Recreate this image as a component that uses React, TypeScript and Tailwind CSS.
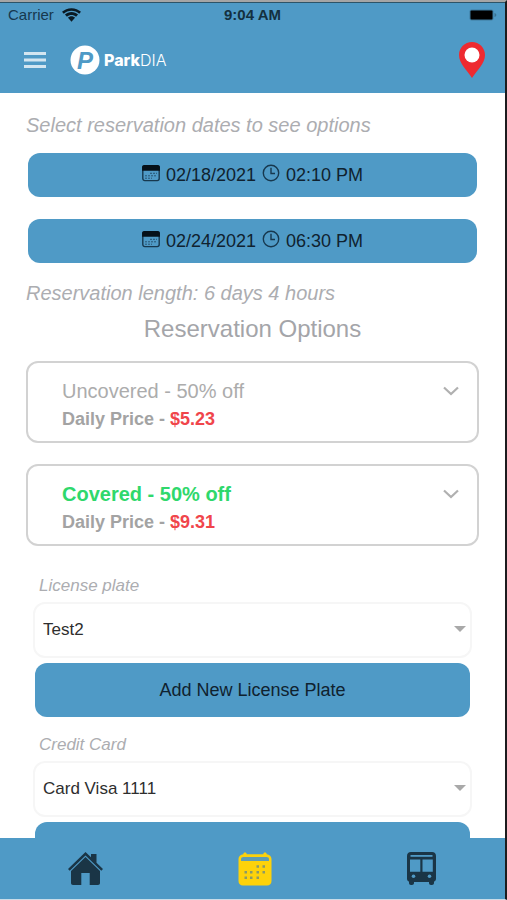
import { useState } from "react";

// brand blue used by the bars and all the buttons: #4f9ac6

function WifiIcon() {
  return (
    <svg width="19" height="14" viewBox="0 0 18 13" fill="currentColor" aria-hidden="true">
      <path d="M9 0C5.500 0 2.300 1.300 0 3.500l1.700 1.800C3.600 3.500 6.200 2.400 9 2.400s5.400 1.100 7.300 2.900L18 3.500C15.700 1.300 12.500 0 9 0z" />
      <path d="M9 3.600c-2.400 0-4.500.9-6.200 2.500l1.900 2C5.900 7 7.300 6.400 9 6.400s3.100.6 4.300 1.700l1.900-2C13.500 4.500 11.400 3.600 9 3.600z" />
      <path d="M9 7.700c-1.300 0-2.400.5-3.300 1.400L9 12.800l3.300-3.700C11.400 8.200 10.300 7.700 9 7.700z" />
    </svg>
  );
}

function CalendarIcon() {
  return (
    <svg width="18" height="18" viewBox="0 0 18 18" fill="none" aria-hidden="true">
      <rect x="0.800" y="1.800" width="16.400" height="14.800" rx="2" stroke="#17384e" strokeWidth="1.400" />
      <path d="M.1 3.300C.1 1.800 1.100 1 2.500 1h13c1.400 0 2.400.8 2.400 2.300v3.500H.1z" fill="#061018" />
      <path d="M8 9.300h7M3 11.800h12M3 14.200h7" stroke="#17384e" strokeWidth="1" strokeOpacity="0.700" strokeDasharray="2 1" />
    </svg>
  );
}

function ClockIcon() {
  return (
    <svg width="18" height="18" viewBox="0 0 18 18" fill="none" stroke="#17384e" strokeWidth="1.400" aria-hidden="true">
      <circle cx="9" cy="9" r="7.700" />
      <path d="M9 3.800V9.500h4" />
    </svg>
  );
}

function HomeIcon() {
  return (
    <svg width="35" height="33" viewBox="0 0 35 33" fill="currentColor" aria-hidden="true">
      <path d="M17.500 0L23 5.300V2h5.500v8.700L35 17l-1.700 1.700L17.500 3.600 1.700 18.700 0 17z" />
      <path d="M17.500 5L32 19v12c0 1.200-.8 2-2 2h-8.300V21h-8.400v12H5c-1.200 0-2-.8-2-2V19z" />
    </svg>
  );
}

function ReservationsIcon() {
  return (
    <svg width="34" height="34" viewBox="0 0 34 34" aria-hidden="true">
      <path d="M7 0.500c1 0 1.700.7 1.700 1.700h16.600c0-1 .7-1.700 1.700-1.700s1.700.7 1.700 1.700c2.800.2 4.800 2 4.800 4.800v22c0 2.900-1.800 4.500-4.500 4.500H5C2.300 33.500.5 31.900.5 29V7c0-2.800 2-4.600 4.800-4.800C5.300 1.200 6 .5 7 .5z" fill="#fdd20a" />
      <path d="M3 9V7.200C3 5.800 4 5 5.400 5h23.200C30 5 31 5.800 31 7.200V9z" fill="#5f9db2" />
      <g fill="#8a9a68">
        <path d="M18.500 13.200H21v2.500h-2.500zM24.500 13.200H27v2.500h-2.500z" />
        <path d="M6.500 19H9v2.500H6.500zM12 19h2.500v2.500H12zM18.500 19H21v2.500h-2.500zM24.500 19H27v2.500h-2.500z" />
        <path d="M6.500 24.500H9V27H6.500zM12 24.500h2.500V27H12zM18.500 24.500H21V27h-2.500z" />
      </g>
    </svg>
  );
}

function BusIcon() {
  return (
    <svg width="29" height="33" viewBox="0 0 29 33" aria-hidden="true">
      <path d="M4 0h21c2.500 0 4 1.500 4 4v22.500c0 1.700-.7 2.700-2 3V31c0 1.200-.8 2-2 2h-1c-1.200 0-2-.8-2-2v-1H7v1c0 1.200-.8 2-2 2H4c-1.200 0-2-.8-2-2v-1.500c-1.300-.3-2-1.300-2-3V4c0-2.500 1.500-4 4-4z" fill="currentColor" />
      <g fill="#4f9ac6">
        <path d="M3.500 3h22v1.800h-22z" />
        <path d="M3 7.500h10.300v12.200H3zM15.500 7.500h10.300v12.200H15.500z" />
        <circle cx="6.500" cy="24.200" r="1.800" />
        <circle cx="22.500" cy="24.200" r="1.800" />
      </g>
    </svg>
  );
}

function DateButton({ date, time }: { date: string; time: string }) {
  return (
    <button className="flex h-11 w-full items-center justify-center gap-1.5 rounded-xl bg-[#4f9ac6] text-lg text-[#10222f]">
      <span className="pb-1"><CalendarIcon /></span>
      {date}
      <span className="pb-1"><ClockIcon /></span>
      {time}
    </button>
  );
}

function OptionCard({ name, price, active }: { name: string; price: string; active?: boolean }) {
  return (
    <button className="flex w-full items-start justify-between rounded-xl border-2 border-[#d2d2d2] pt-3.5 pr-4 pb-2 pl-[34px] text-left">
      <span>
        <span className={active ? "block text-xl leading-7 font-bold text-[#2fd86c]" : "block text-xl leading-7 text-[#acacac]"}>
          {name} - 50% off
        </span>
        <span className="block text-lg leading-7 font-bold text-[#a3a3a3]">
          Daily Price - <span className="text-[#f0454b]">{price}</span>
        </span>
      </span>
      <svg className="mt-1" width="20" height="20" viewBox="0 0 20 20" fill="none" stroke="#b0b0b0" strokeWidth="2.200" aria-hidden="true">
        <path d="M3 6.500l7 6.500 7-6.500" />
      </svg>
    </button>
  );
}

function SelectField({ id, label, options }: { id: string; label: string; options: string[] }) {
  return (
    <div>
      <label htmlFor={id} className="block pl-1 text-[17px] leading-6 text-[#acadb1] italic">
        {label}
      </label>
      <div className="relative -mx-0.5 mt-1">
        <select id={id} className="h-14 w-full appearance-none rounded-xl border-2 border-[#f6f6f6] bg-white px-2 text-[17px] text-[#2e2e2e]">
          {options.map((o) => (
            <option key={o}>{o}</option>
          ))}
        </select>
        <svg className="pointer-events-none absolute top-6 right-1.5" width="12" height="6" viewBox="0 0 12 6" fill="#a9a9a9" aria-hidden="true">
          <path d="M0 0h12L6 6z" />
        </svg>
      </div>
    </div>
  );
}

function AddButton({ label, children }: { label: string; children?: string }) {
  return (
    <button type="button" aria-label={label} className="mt-[5px] h-[54px] w-full rounded-xl bg-[#4f9ac6] text-lg text-[#10222f]">
      {children}
    </button>
  );
}

function Header() {
  return (
    <header className="border-t border-[#2d5468] bg-[#4f9ac6]">
      {/* Status bar */}
      <div className="grid grid-cols-3 items-center px-2 text-[15px] leading-6 text-[#17384e]">
        <span className="flex items-center gap-2">
          Carrier <span className="text-[#0b1a24]"><WifiIcon /></span>
        </span>
        <span className="text-center font-bold text-[#14303f]">9:04 AM</span>
        <svg className="justify-self-end" width="28" height="12" viewBox="0 0 28 12" aria-hidden="true">
          <rect x="0.500" y="0.500" width="24" height="11" rx="2" fill="#3f7b9e" />
          <rect x="1.500" y="1.500" width="22" height="9" rx="1" fill="#000" />
          <path d="M25.500 4v4c1-.3 1.800-1 1.800-2s-.8-1.700-1.800-2z" fill="#3a7393" />
        </svg>
      </div>

      {/* Menu, logo, location */}
      <div className="flex h-[66px] items-center pr-5 pl-6">
        <button aria-label="Menu">
          <svg width="22" height="16" viewBox="0 0 22 16" fill="#d3e6f1" aria-hidden="true">
            <rect width="22" height="3" />
            <rect y="6.500" width="22" height="3" />
            <rect y="13" width="22" height="3" />
          </svg>
        </button>
        <a href="#" className="ml-6 flex items-center gap-1 text-white">
          <svg width="30" height="30" viewBox="0 0 30 30" aria-hidden="true">
            <circle cx="15" cy="15" r="14.500" fill="#fff" />
            <text x="7" y="24" fontSize="24" fontWeight="bold" fontStyle="italic" fill="#4f9ac6">P</text>
          </svg>
          <span className="font-[family-name:Inter] text-base font-extrabold">
            Park<span className="font-light">DIA</span>
          </span>
        </a>
        <button aria-label="Location" className="ml-auto">
          <svg width="26" height="36" viewBox="0 0 26 36" aria-hidden="true">
            <path d="M13 0C5.800 0 0 5.800 0 13c0 8 7 14 13 23 6-9 13-15 13-23C26 5.800 20.200 0 13 0z" fill="#ee2a30" />
            <circle cx="13" cy="13" r="7.500" fill="#fff" />
          </svg>
        </button>
      </div>
    </header>
  );
}

function BottomNav() {
  return (
    <nav className="flex h-[61px] shrink-0 items-center justify-around bg-[#4f9ac6] pr-0.5 text-[#1a3546]">
      <a href="#" aria-label="Home"><HomeIcon /></a>
      <a href="#" aria-label="Reservations"><ReservationsIcon /></a>
      <a href="#" aria-label="Shuttle"><BusIcon /></a>
    </nav>
  );
}

export default function App() {
  const [plates] = useState(["Test2"]);
  const [cards] = useState(["Card Visa 1111"]);

  return (
    <div className="flex h-screen flex-col border-t-2 border-r-2 border-b border-t-[#a5a5a5] border-r-[#1c1c1e] border-b-[#c9dce8] bg-white font-['Liberation_Sans',Arial,sans-serif]">
      <Header />

      <main className="flex-1 overflow-y-auto pt-[18px] [scrollbar-width:none]">
        <div className="px-[26px]">
          <p className="text-xl leading-7 text-[#acadb1] italic">Select reservation dates to see options</p>
          <div className="mt-3.5 flex flex-col gap-[22px] px-0.5">
            <DateButton date="02/18/2021" time="02:10 PM" />
            <DateButton date="02/24/2021" time="06:30 PM" />
          </div>
          <p className="mt-4 text-xl leading-7 text-[#acadb1] italic">Reservation length: 6 days 4 hours</p>
        </div>

        <section className="px-[26px] pt-1">
          <h1 className="text-center text-2xl leading-9 text-[#a4a5a9]">Reservation Options</h1>
          <div className="mt-3.5 flex flex-col gap-[21px]">
            <OptionCard name="Uncovered" price="$5.23" />
            <OptionCard name="Covered" price="$9.31" active />
          </div>
        </section>

        <form className="flex flex-col gap-4 px-[35px] pt-7 pb-4">
          <div>
            <SelectField id="plate" label="License plate" options={plates} />
            <AddButton label="Add New License Plate">Add New License Plate</AddButton>
          </div>
          <div>
            <SelectField id="card" label="Credit Card" options={cards} />
            <AddButton label="Add New Credit Card" />
          </div>
        </form>
      </main>

      <BottomNav />
    </div>
  );
}
